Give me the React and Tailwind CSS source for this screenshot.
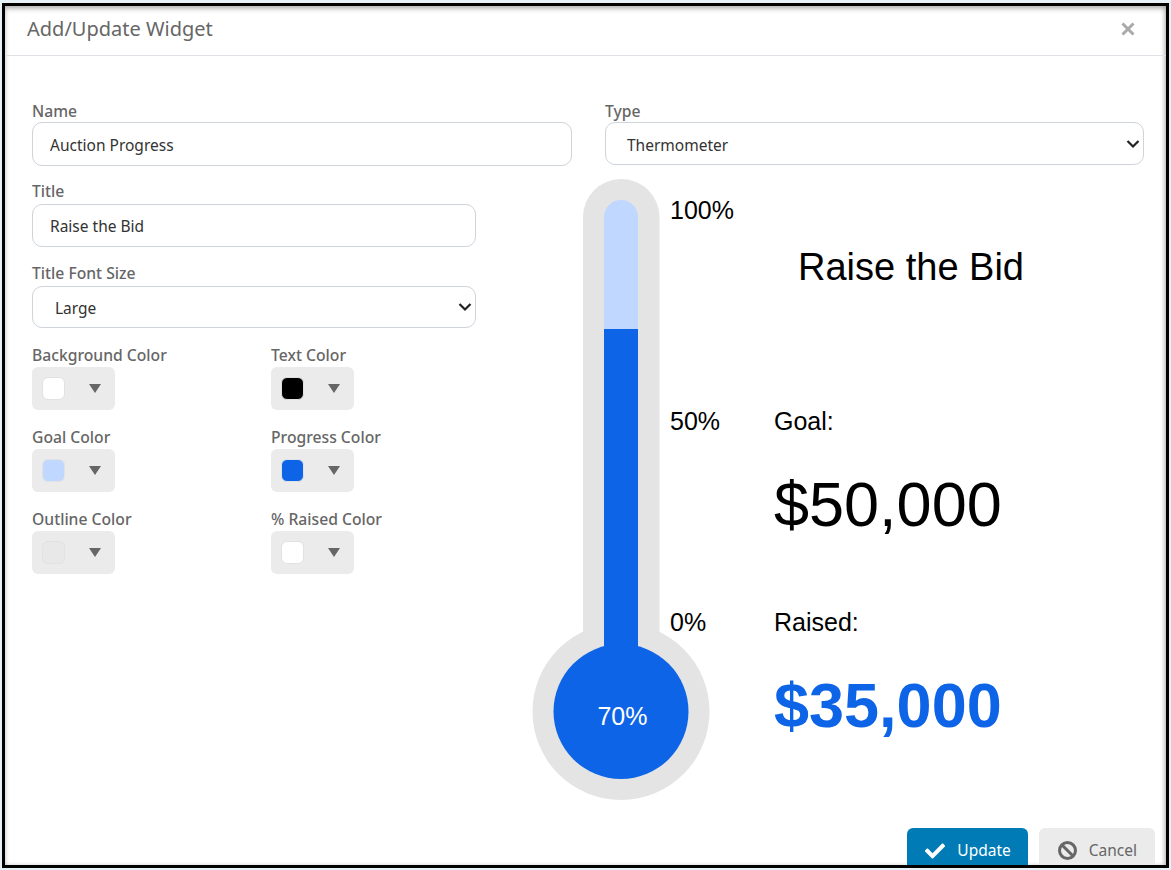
import { FaCheck } from 'react-icons/fa'

const sans = { fontFamily: '"Noto Sans", sans-serif' }
const arial = { fontFamily: '"Liberation Sans", Arial, sans-serif' }

function Label({ children, className = 'mb-[2px]' }) {
  return <label className={`block h-5 text-[15.7px] leading-5 font-medium text-[#666] ${className}`}>{children}</label>
}

function Select({ value, className }) {
  return (
    <div className="relative">
      <select
        defaultValue={value}
        className={`w-full appearance-none pr-6 rounded-[10px] border border-[#ced4da] bg-white text-[15.5px] text-[#333] outline-none ${className}`}
      >
        <option>{value}</option>
      </select>
      <svg width="14" height="9" viewBox="0 0 14 9" className="absolute right-[4px] top-1/2 -translate-y-1/2 pointer-events-none">
        <path d="M1.5 1.5L7 7l5.5-5.5" fill="none" stroke="#222" strokeWidth="2.2" />
      </svg>
    </div>
  )
}

function ColorPicker({ label, swatch }) {
  return (
    <div>
      <Label>{label}</Label>
      <div className="flex items-center w-[83px] h-[43px] rounded-md bg-[#ebebeb] pl-[10px]">
        <span className={`w-[23px] h-[23px] rounded-md border border-[#e2e2e2] ${swatch}`} />
        <svg width="12" height="9" viewBox="0 0 12 9" className="ml-[24px] -mt-px">
          <path d="M0 0h12L6 9z" fill="#666" />
        </svg>
      </div>
    </div>
  )
}

function Thermometer() {
  return (
    <svg width="208" height="621" viewBox="532 179 208 621" className="shrink-0 ml-[56px]" style={arial}>
      {/* outline */}
      <rect x="583" y="179" width="76.5" height="500" rx="38" fill="#e4e4e4" />
      <circle cx="621" cy="711.5" r="88.5" fill="#e4e4e4" />
      {/* goal + progress */}
      <rect x="604" y="200" width="34" height="200" rx="17" fill="#c0d7ff" />
      <rect x="604" y="329" width="34" height="340" fill="#0e64e6" />
      <circle cx="621" cy="711.5" r="67.5" fill="#0e64e6" />
      <text x="670" y="219" fontSize="25" fill="#000">100%</text>
      <text x="670" y="430" fontSize="25" fill="#000">50%</text>
      <text x="670" y="631" fontSize="25" fill="#000">0%</text>
      <text x="622.5" y="725" fontSize="25" fill="#fff" textAnchor="middle">70%</text>
    </svg>
  )
}

export default function App() {
  return (
    <div className="w-[1171px] h-[870px] overflow-hidden bg-[#e6f0f7] pt-[3px] pl-[2px]" style={sans}>
      <div className="flex flex-col w-[1167px] h-[865px] overflow-hidden border-[3px] border-black bg-white shadow-[inset_0_3px_5px_rgba(0,0,0,0.25),inset_-2px_0_4px_rgba(0,0,0,0.15)]">
        {/* Header */}
        <div className="flex items-center justify-between shrink-0 h-[50px] pl-[22px] pr-[31px] pb-[3px] border-b border-[#dee2e6]">
          <h2 className="text-[20px] leading-7 font-normal text-[#666]">Add/Update Widget</h2>
          <svg width="14" height="14" viewBox="0 0 14 14">
            <path d="M1.5 1.5l11 11M12.5 1.5l-11 11" stroke="#aaa" strokeWidth="3" />
          </svg>
        </div>

        {/* Body */}
        <div className="shrink-0 pl-[27px] pr-[22px] pt-[45px]">
          <div className="flex gap-[33px]">
            <div className="w-[540px]">
              <Label className="mb-px">Name</Label>
              <input
                defaultValue="Auction Progress"
                className="w-full h-[44px] pl-[17px] pr-4 pt-px rounded-[10px] border border-[#ced4da] bg-white text-[15.5px] text-[#333] outline-none"
              />
            </div>
            <div className="w-[539px]">
              <Label className="mb-px">Type</Label>
              <Select value="Thermometer" className="h-[43px] pl-[21px] pt-[5px]" />
            </div>
          </div>

          <div className="flex mt-[13px]">
            {/* Settings column */}
            <div className="w-[444px] shrink-0 pt-[2px]">
              <Label>Title</Label>
              <input
                defaultValue="Raise the Bid"
                className="w-full h-[43px] mt-px pl-[17px] pr-4 rounded-[10px] border border-[#ced4da] bg-white text-[15.5px] text-[#333] outline-none"
              />
              <div className="mt-[16px]">
                <Label>Title Font Size</Label>
                <Select value="Large" className="h-[42px] mt-px pl-[22px] pt-[4px]" />
              </div>
              <div className="grid grid-cols-[239px_1fr] mt-[17px] gap-y-[17px]">
                <ColorPicker label="Background Color" swatch="bg-white" />
                <ColorPicker label="Text Color" swatch="bg-black" />
                <ColorPicker label="Goal Color" swatch="bg-[#c0d7ff]" />
                <ColorPicker label="Progress Color" swatch="bg-[#0e64e6]" />
                <ColorPicker label="Outline Color" swatch="bg-[#e8e8e8]" />
                <ColorPicker label="% Raised Color" swatch="bg-white" />
              </div>
            </div>

            <Thermometer />

            {/* Preview text */}
            <div className="ml-[34px] w-[336px] text-black" style={arial}>
              <div className="mt-[68px] w-[274px] text-center text-[38px] leading-[41px]">Raise the Bid</div>
              <div className="mt-[119px] text-[25px] leading-7">Goal:</div>
              <div className="mt-[32px] text-[63px] leading-[74px]">$50,000</div>
              <div className="mt-[67px] text-[25px] leading-7">Raised:</div>
              <div className="mt-[32px] text-[63px] leading-[74px] font-bold text-[#0e64e6]">$35,000</div>
            </div>
          </div>
        </div>

        {/* Footer, runs past the bottom edge in the shot */}
        <div className="flex justify-end gap-[11px] shrink-0 mt-[28px] pr-[11px]">
          <button className="flex items-center gap-3 h-[44px] pl-[18px] pr-[17px] pt-px rounded-md bg-[#007bb6] text-[15.5px] text-white">
            <FaCheck size={20} />
            Update
          </button>
          <button className="flex items-center gap-3 h-[44px] pl-[19px] pr-[18px] pt-px rounded-md bg-[#ebebeb] text-[15.5px] text-[#666]">
            <svg width="19" height="19" viewBox="0 0 19 19" fill="none" stroke="#666" strokeWidth="3">
              <circle cx="9.5" cy="9.5" r="8" />
              <path d="M4 4l11 11" />
            </svg>
            Cancel
          </button>
        </div>
      </div>
    </div>
  )
}
